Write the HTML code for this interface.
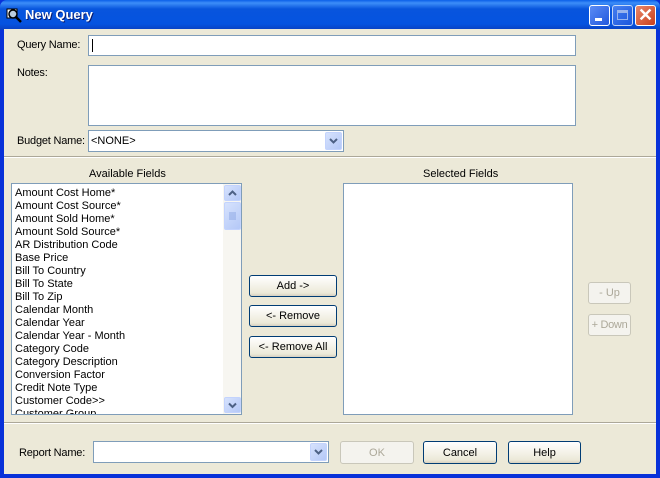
<!DOCTYPE html>
<html><head><style>
*{margin:0;padding:0;box-sizing:border-box}
body{width:660px;height:478px;overflow:hidden;font-family:"Liberation Sans",sans-serif;font-size:11px;color:#000;background:#0831d9;position:relative}
.a{position:absolute}
#title{left:0;top:0;width:660px;height:30px;background:linear-gradient(#0a5fe8 0%,#3d8ef8 10%,#0855dd 30%,#0553e0 80%,#0a3fc0 100%);border-radius:7px 7px 0 0}
#body{left:4px;top:29px;width:652px;height:445px;background:#ece9d8}
.tb{width:21px;height:21px;border:1px solid #fff;border-radius:3px;top:5px;background:linear-gradient(135deg,#5b8cf5,#2258dd)}
.in{background:#fff;border:1px solid #7f9db9}
.lbl{white-space:nowrap;letter-spacing:-0.2px}
.btn{border:1px solid #003c74;border-radius:3px;background:linear-gradient(#fff,#ece9d8 85%,#d6d0c0);text-align:center;line-height:21px}
.dis{border:1px solid #c9c7ba;border-radius:3px;background:#f4f3ee;color:#aca899;text-align:center;line-height:21px}
.dd{width:17px;background:linear-gradient(135deg,#d6e2fd,#b4c8f7);border:1px solid #c3d3fd;border-radius:2px}
.sep{height:2px;border-top:1px solid #aca899;border-bottom:1px solid #fff}
.it{left:3px;line-height:13px;white-space:nowrap}
</style></head><body>
<div id="title" class="a"></div>
<div class="a" style="left:6px;top:7px;width:16px;height:16px">
<svg width="16" height="16"><rect x="1" y="2" width="10" height="9" fill="#fff" stroke="#000"/><circle cx="7" cy="7" r="4" fill="#bcd" stroke="#000" stroke-width="1.5"/><path d="M10 10 L15 15" stroke="#000" stroke-width="2.5"/></svg></div>
<div class="a" style="left:25px;top:7px;color:#fff;font-weight:bold;font-size:13px;text-shadow:1px 1px #0a1c70">New Query</div>
<div class="a tb" style="left:589px"><div class="a" style="left:5px;top:12px;width:7px;height:3px;background:#fff"></div></div>
<div class="a tb" style="left:612px;opacity:.75"><div class="a" style="left:4px;top:4px;width:11px;height:10px;border:1px solid #c8d4f4;border-top-width:3px"></div></div>
<div class="a tb" style="left:635px;background:linear-gradient(135deg,#e9876a,#c8401c);color:#fff;font-size:18px;line-height:18px;text-align:center;font-weight:bold">✕</div>
<div id="body" class="a"></div>
<div class="a lbl" style="left:17px;top:39px">Query Name:</div>
<div class="a in" style="left:88px;top:35px;width:488px;height:21px"><div class="a" style="left:3px;top:3px;width:1px;height:13px;background:#000"></div></div>
<div class="a lbl" style="left:17px;top:67px">Notes:</div>
<div class="a in" style="left:88px;top:65px;width:488px;height:61px"></div>
<div class="a lbl" style="left:17px;top:135px">Budget Name:</div>
<div class="a in" style="left:88px;top:130px;width:256px;height:22px"><div class="a" style="left:2px;top:4px">&lt;NONE&gt;</div><div class="a dd" style="right:1px;top:1px;height:18px"><svg width="15" height="16"><path d="M4 6 L7.5 9.5 L11 6" stroke="#4d6185" stroke-width="2" fill="none"/></svg></div></div>
<div class="a sep" style="left:4px;top:156px;width:652px"></div>
<div class="a" style="left:89px;top:168px">Available Fields</div>
<div class="a" style="left:423px;top:168px">Selected Fields</div>
<div class="a in" style="left:11px;top:183px;width:231px;height:232px;overflow:hidden">
<div class="a" style="left:0;top:3px;width:210px">
<div class="it a" style="top:0">Amount Cost Home*</div>
<div class="it a" style="top:13px">Amount Cost Source*</div>
<div class="it a" style="top:26px">Amount Sold Home*</div>
<div class="it a" style="top:39px">Amount Sold Source*</div>
<div class="it a" style="top:52px">AR Distribution Code</div>
<div class="it a" style="top:65px">Base Price</div>
<div class="it a" style="top:78px">Bill To Country</div>
<div class="it a" style="top:91px">Bill To State</div>
<div class="it a" style="top:104px">Bill To Zip</div>
<div class="it a" style="top:117px">Calendar Month</div>
<div class="it a" style="top:130px">Calendar Year</div>
<div class="it a" style="top:143px">Calendar Year - Month</div>
<div class="it a" style="top:156px">Category Code</div>
<div class="it a" style="top:169px">Category Description</div>
<div class="it a" style="top:182px">Conversion Factor</div>
<div class="it a" style="top:195px">Credit Note Type</div>
<div class="it a" style="top:208px">Customer Code&gt;&gt;</div>
<div class="it a" style="top:221px">Customer Group</div>
</div>
<div class="a" style="left:211px;top:0;width:18px;height:230px;background:#f7f6f1"></div>
<div class="a dd" style="left:212px;top:1px;height:16px"><svg width="15" height="15"><path d="M4 9 L7.5 5.5 L11 9" stroke="#4d6185" stroke-width="2" fill="none"/></svg></div>
<div class="a dd" style="left:212px;top:18px;height:28px"><svg width="15" height="26"><path d="M4 10h7M4 12h7M4 14h7M4 16h7" stroke="#8ea8e4"/></svg></div>
<div class="a dd" style="left:212px;top:213px;height:16px"><svg width="15" height="15"><path d="M4 5.5 L7.5 9 L11 5.5" stroke="#4d6185" stroke-width="2" fill="none"/></svg></div>
</div>
<div class="a in" style="left:343px;top:183px;width:230px;height:232px"></div>
<div class="a btn" style="left:249px;top:275px;width:88px;height:22px">Add -&gt;</div>
<div class="a btn" style="left:249px;top:305px;width:88px;height:22px">&lt;- Remove</div>
<div class="a btn" style="left:249px;top:336px;width:88px;height:22px">&lt;- Remove All</div>
<div class="a dis" style="left:588px;top:282px;width:43px;height:22px">- Up</div>
<div class="a dis" style="left:588px;top:314px;width:43px;height:22px;letter-spacing:-0.3px">+ Down</div>
<div class="a sep" style="left:4px;top:422px;width:652px"></div>
<div class="a lbl" style="left:19px;top:447px">Report Name:</div>
<div class="a in" style="left:93px;top:441px;width:236px;height:22px"><div class="a dd" style="right:1px;top:1px;height:18px"><svg width="15" height="16"><path d="M4 6 L7.5 9.5 L11 6" stroke="#4d6185" stroke-width="2" fill="none"/></svg></div></div>
<div class="a dis" style="left:340px;top:441px;width:74px;height:23px;line-height:23px">OK</div>
<div class="a btn" style="left:423px;top:441px;width:74px;height:23px;line-height:23px">Cancel</div>
<div class="a btn" style="left:508px;top:441px;width:73px;height:23px;line-height:23px">Help</div>
</body></html>
